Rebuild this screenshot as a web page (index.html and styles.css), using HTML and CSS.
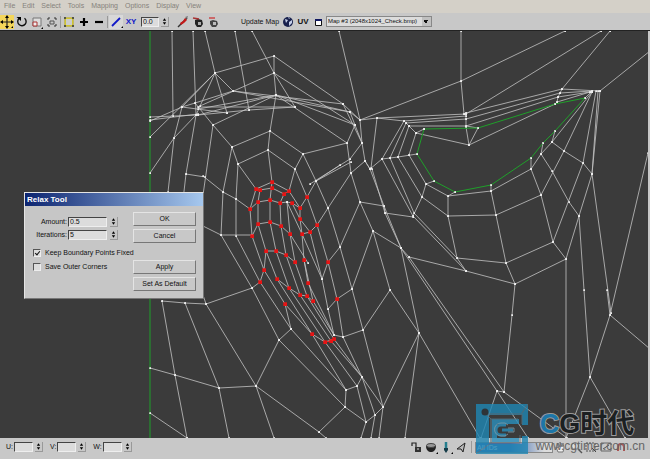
FILE: index.html
```
<!DOCTYPE html>
<html>
<head lang="en">
    <meta charset="UTF-8">
    <title>Edit UVWs</title>
    <link rel="stylesheet" href="styles.css">
</head>
<body>

<ul class="menu">
    <li><a href="#">File</a></li>
    <li><a href="#">Edit</a></li>
    <li><a href="#">Select</a></li>
    <li><a href="#">Tools</a></li>
    <li><a href="#">Mapping</a></li>
    <li><a href="#">Options</a></li>
    <li><a href="#">Display</a></li>
    <li><a href="#">View</a></li>
</ul>

<div class="toolbar">
    <div class="tools">
        <button class="tool active" aria-label="Move"><svg viewBox="0 0 14 14"><path d="M7 2v10M2 7h10" stroke="#222" stroke-width="1.2"/><path d="M7 0l2 3H5zM7 14l2-3H5zM0 7l3-2v4zM14 7l-3-2v4z"/><path d="M11 13h2v-2z"/></svg></button>
        <button class="tool" aria-label="Rotate"><svg viewBox="0 0 14 14"><path d="M4 3.500A4.200 4.200 0 1 0 9.500 3.200" fill="none" stroke="#111" stroke-width="1.400"/><path d="M1.500 2h4.500v4z"/></svg></button>
        <button class="tool" aria-label="Scale"><svg viewBox="0 0 14 14"><path d="M3 3h8v8H3z" fill="#ddd" stroke="#777"/><path d="M3 7h4v4H3z" fill="#eee" stroke="#a33"/><path d="M11 14h2v-2z"/></svg></button>
        <button class="tool" aria-label="Freeform mode"><svg viewBox="0 0 14 14"><path d="M3 5V3h2M9 3h2v2M11 9v2H9M5 11H3V9" fill="none" stroke="#333"/><path d="M5 6h4v3H5z" fill="none" stroke="#555"/></svg></button>
        <span class="sep"></span>
        <button class="tool" aria-label="Select element"><svg viewBox="0 0 14 14"><path d="M3 3h8v8H3z" fill="#e8e060" stroke="#b8a800"/><path d="M2 2h2v2H2zM10 2h2v2h-2zM2 10h2v2H2zM10 10h2v2h-2z" fill="#554"/><path d="M4 4h6v6H4z" fill="#ccc"/></svg></button>
        <button class="tool" aria-label="Expand selection"><svg viewBox="0 0 14 14"><path d="M7 3v8M3 7h8" stroke="#000" stroke-width="2.200"/></svg></button>
        <button class="tool" aria-label="Contract selection"><svg viewBox="0 0 14 14"><path d="M3 7h8" stroke="#000" stroke-width="2.200"/></svg></button>
        <span class="sep"></span>
        <button class="tool lit" aria-label="Soft selection falloff"><svg viewBox="0 0 14 14"><path d="M3 11l8-8" stroke="#1018c8" stroke-width="1.800"/><path d="M12 13h2v-2z"/></svg></button>
        <button class="tool axis">XY</button>
        <span class="spinner">
            <input type="text" value="0.0" aria-label="Falloff" class="num falloff">
            <button class="arrows" aria-label="Adjust falloff"><svg viewBox="0 0 6 10"><path d="M3 1l2 3H1zM3 9l2-3H1z"/></svg></button>
        </span>
        <button class="tool brush" aria-label="Break"><svg viewBox="0 0 14 14"><path d="M2 12l9-9" stroke="#333" stroke-width="1.400"/><path d="M4 8l3-2 2-3 2 2-3 3-3 2z" fill="#c21818"/><path d="M9 2l3-1-1 3z" fill="#777"/></svg></button>
        <button class="tool" aria-label="Weld"><svg viewBox="0 0 14 14"><path d="M4 5l3-1 4 1 1 4-2 3H6L4 9z" fill="#222"/><path d="M7 7h3v3H7z" fill="#aaa"/><path d="M2 3l6 1" stroke="#a33" stroke-width="1.300"/></svg></button>
        <button class="tool" aria-label="Weld selected"><svg viewBox="0 0 14 14"><path d="M4 6l3-1 4 1 1 3-2 3H6L4 9z" fill="#444"/><path d="M7 7h3v3H7z" fill="#bbb"/><path d="M3 3h6" stroke="#c33" stroke-width="1.300"/></svg></button>
    </div>
    <div class="map-tools">
        <button class="update">Update Map</button>
        <button class="tool" aria-label="Show map"><svg viewBox="0 0 14 14"><circle cx="7" cy="7" r="5" fill="#18204c"/><path d="M4 4l3 1-2 3zM8 7l3-2v3l-3 3zM7 2l2 1-1 1z" fill="#c6d0ea"/></svg></button>
        <button class="tool uv">UV</button>
        <button class="tool" aria-label="Show dialog"><svg viewBox="0 0 14 14"><path d="M4.500 4.500h6v6h-6z" fill="#fff" stroke="#111"/><path d="M4 4h7v2H4z" fill="#101860"/></svg></button>
        <select class="map-list" aria-label="Texture">
            <option>Map #3 (2048x1024_Check.bmp)</option>
        </select>
    </div>
</div>

<div class="view">
    <svg class="mesh" viewBox="0 31 648 407" preserveAspectRatio="xMidYMid slice">
        <defs>
            <marker id="dot" markerUnits="userSpaceOnUse" markerWidth="1.400" markerHeight="1.400" refX="0.700" refY="0.700"><path d="M0 0h2v2H0z"/></marker>
            <marker id="picked" markerUnits="userSpaceOnUse" markerWidth="3.400" markerHeight="3.400" refX="1.700" refY="1.700"><path d="M0 0h4v4H0z"/></marker>
        </defs>
        <path class="seam" d="M150 31V438"/>

        <!-- upper left -->
        <path class="wire" d="M172 31L173 116M193 31L196 115M205 31L215 73L227 113M235 31L249 110M252 31L274 73
            M274 56V73L276 95L270 131L268 150L272 182M215 73L274 56L343 104M274 73L355 125M274 73L295 107
            M276 95L347 143M215 73L233 91L343 104M215 73L182 107L195 103L233 91L350 112M215 73L196 115M215 73L150 137
            M150 117L198 115L249 110L295 107M150 121L182 107M150 120L198 114M274 73L200 106M198 109L276 95L355 125M198 115L276 95L350 112
            M150 173L174 138L196 115M182 107L174 138L168 192M196 115L186 174L205 177M186 174L183 200
            M195 103L213 125L232 147L238 164L256 189M276 95L213 125L203 195M232 147L223 192M238 164L236 199
            M182 107L227 113M198 107L295 107
            M232 147L270 131L303 154L295 169L289 191M238 164L268 150L295 169L307 197M303 154L347 143M303 154L316 181"/>

        <!-- centre ridge -->
        <path class="wire" d="M339 31L360 120L362 143L365 161L370 169M343 104L360 120M343 104L362 143M350 112L355 125L347 143L351 173M355 125L362 143
            M350 112L360 120M360 120L461 81L565 31M461 31L461 81L464 114M360 120L377 118L466 114M377 118L404 121L466 116M377 118L371 168
            M406 123L466 119M409 126L466 126L478 128M416 133L469 145M404 121L382 159M406 123L390 158M409 126L398 157M416 133L409 155
            M365 161L370 169L382 159L390 158L398 157L417 154M404 121L409 126L416 133L424 129M464 114L466 113V127L469 145L478 128
            M310 184L350 159L362 143M316 181L351 162M351 173L365 161"/>

        <!-- eye socket -->
        <path class="wire" d="M466 114L601 31M562 89L610 31M466 113L562 89M466 119L560 93M466 126L558 97M600 91L650 51
            M562 89L600 91M560 93L592 91M558 97L562 89M557 102L558 97L590 92M469 145L555 104L557 102L590 92M585 98L592 91
            M592 92L552 142L541 154L531 169L491 191M555 131L552 142M543 143L541 154M531 158L531 169
            M592 92L564 151L541 195M596 91L583 163L553 242M598 91L592 174M600 91L592 174
            M552 142L564 151L583 163L592 174M541 154L552 171L569 202L579 216M434 181L426 184L448 196L491 191
            M455 192L448 196L448 216L457 258L506 263L553 242L541 195L531 169M491 185V191L496 215L506 263L515 284L566 259L553 242
            M409 155L426 184L422 197L413 216M398 157L422 197L448 216L496 215L541 195
            M592 174L579 216L566 259V438M592 174L611 313M579 216L584 290L590 377M515 284L512 315L504 392
            M382 159L413 216L466 271M390 158L414 213L457 258L466 271M409 257L466 271L515 284
            M648 153L610 315L590 377L566 438M590 377L625 438M607 290L610 315L650 349"/>

        <!-- nose and cheek -->
        <path class="wire" d="M360 202L384 206L385 213L413 217M370 169L384 206L401 248L409 257L504 392M372 169L385 213L401 248L497 391L504 392
            M401 248L419 333M373 231L401 248M351 173L360 202L373 231L390 290L419 333M373 231L352 289M390 290L363 330
            M419 333L383 407M419 333L405 438M419 333L480 438M497 391L481 438M497 391L528 438M504 392L567 438"/>

        <!-- mouth strips -->
        <path class="wire" d="M256 189L272 182L289 191L300 208L307 197L316 181L340 165M256 189L260 190L272 188L284 194L289 191M284 194L280 203M260 190L258 202
            M250 209L258 202L270 200L280 203L287 202L292 203L300 208M252 236L258 224L270 222L281 226L290 234M302 234L310 232L317 225L328 208
            M256 189L250 209L252 236L264 270M258 202V224L266 251M272 182L270 200V222L276 251M280 203L281 226L286 255M287 202L290 234L295 262M287 202L302 234L322 279
            M292 203L300 219L310 232L322 279M300 208V219L302 234L304 260L308 283M307 197L317 225L328 262L337 299L343 337
            M266 251H276L286 255L295 262M266 251L264 270L260 282L252 288L206 304L185 303L162 301
            M290 234L308 263M203 176L223 192L236 199L250 209M203 226L221 235H252M223 192L221 235L252 288L279 340L256 386
            M236 199V236L260 282L291 329M316 181L328 208L340 247L352 289L363 330L383 407
            M351 173L328 208M360 202L340 247L328 262L322 279L328 309L337 299L352 289M328 309L334 335L343 337L363 330
            M264 270L285 304M266 251L277 279L289 288L300 295L307 296L313 301M276 251L289 288M286 255L300 295M295 262L307 296M304 260L313 301
            M277 279L312 334M289 288L325 342M300 295L331 341M307 296L334 339M313 301L334 335M308 283L334 335"/>

        <!-- chin -->
        <path class="wire" d="M343 337L362 377L357 386L346 390M334 339L362 377L383 407M325 342L357 386M331 341L362 377M312 334L346 390
            M285 304L312 334L325 342L334 339M346 390L345 407L319 432L256 386M279 340L345 407M291 329L346 390M279 340L291 329L285 304
            M206 304L256 386M206 304L203 295M185 303L219 388L229 438M162 301L175 375L187 438M150 368L175 375L219 388L256 386L274 438M150 413L187 438
            M319 432L326 438M345 407L366 422L375 415L383 407M357 386L366 422L361 438M362 377L375 415L371 438M383 407L379 438"/>

        <path class="open-edge" d="M424 129L478 128L555 104L585 98L555 131L543 143L531 158L491 185L455 192L434 181L417 154Z"/>
        <path class="edge" d="M325 342L331 341L334 339M256 189L260 190M284 194L289 191"/>
        <path class="points" d="M256 189L260 190L272 182L272 188L284 194L289 191L250 209L258 202L270 200L280 203L292 203L300 208L307 197
            L300 219L317 225L310 232L302 234L290 234L281 226L270 222L258 224L252 236L266 251L276 251L286 255L295 262L304 260L328 262
            L264 270L260 282L277 279L289 288L300 295L307 296L313 301L308 283L337 299L285 304L312 334L325 342L331 341L334 339"/>
    </svg>

    <form class="dialog">
        <h1 class="dialog-title">Relax Tool</h1>
        <div class="dialog-body">
            <div class="fields">
                <div class="field">
                    <label for="amount">Amount:</label>
                    <input type="text" id="amount" value="0.5" class="num">
                    <button type="button" class="arrows" aria-label="Adjust amount"><svg viewBox="0 0 6 10"><path d="M3 1l2 3H1zM3 9l2-3H1z"/></svg></button>
                </div>
                <div class="field">
                    <label for="iterations">Iterations:</label>
                    <input type="text" id="iterations" value="5" class="num">
                    <button type="button" class="arrows" aria-label="Adjust iterations"><svg viewBox="0 0 6 10"><path d="M3 1l2 3H1zM3 9l2-3H1z"/></svg></button>
                </div>
                <label class="check first"><input type="checkbox" checked>Keep Boundary Points Fixed</label>
                <label class="check"><input type="checkbox">Save Outer Corners</label>
            </div>
            <div class="buttons">
                <button type="button">OK</button>
                <button type="button">Cancel</button>
                <button type="button" class="apply">Apply</button>
                <button type="button">Set As Default</button>
            </div>
        </div>
    </form>
</div>

<div class="status">
    <div class="coords">
        <label for="u">U:</label>
        <input type="text" id="u" class="num">
        <button class="arrows" aria-label="Adjust U"><svg viewBox="0 0 6 10"><path d="M3 1l2 3H1zM3 9l2-3H1z"/></svg></button>
        <label for="v">V:</label>
        <input type="text" id="v" class="num">
        <button class="arrows" aria-label="Adjust V"><svg viewBox="0 0 6 10"><path d="M3 1l2 3H1zM3 9l2-3H1z"/></svg></button>
        <label for="w">W:</label>
        <input type="text" id="w" class="num">
        <button class="arrows" aria-label="Adjust W"><svg viewBox="0 0 6 10"><path d="M3 1l2 3H1zM3 9l2-3H1z"/></svg></button>
    </div>
    <div class="view-tools">
        <button class="tool" aria-label="Lock"><svg viewBox="0 0 14 14"><path d="M6 7h6v5H6z" fill="#333"/><path d="M3 6V3h4v4" fill="none" stroke="#222" stroke-width="1.200"/><path d="M8 9h2" stroke="#ddd"/></svg></button>
        <button class="tool" aria-label="Hide"><svg viewBox="0 0 14 14"><path d="M2 6c0 8 10 8 10 0z" fill="#222"/><ellipse cx="7" cy="5.500" rx="4.500" ry="2" fill="#999" stroke="#444"/><path d="M12 14h2v-2z"/></svg></button>
        <button class="tool" aria-label="Freeze"><svg viewBox="0 0 14 14"><path d="M7 2v7" stroke="#257e8e" stroke-width="2.500"/><path d="M5 8h4v2l-2 3-2-3z" fill="#153c48"/><path d="M12 14h2v-2z"/></svg></button>
        <button class="tool" aria-label="Filter faces"><svg viewBox="0 0 14 14"><path d="M3 9l8-6-2 9-2-3z" fill="#bbb" stroke="#222"/></svg></button>
        <span class="sep"></span>
        <select class="id-list" aria-label="Material IDs">
            <option>All IDs</option>
        </select>
        <button class="tool" aria-label="Pan"><svg viewBox="0 0 14 14"><path d="M4 12L2 7l2 1V3l2 4V2l2 5 1-4 1 5-1 4z" fill="#eee" stroke="#777"/></svg></button>
        <button class="tool" aria-label="Zoom"><svg viewBox="0 0 14 14"><circle cx="6" cy="6" r="3.500" fill="#ddd" stroke="#777"/><path d="M9 9l4 4" stroke="#555" stroke-width="1.500"/></svg></button>
        <button class="tool" aria-label="Zoom region"><svg viewBox="0 0 14 14"><path d="M2 3h9v8H2z" fill="none" stroke="#555" stroke-dasharray="2 1"/><path d="M8 8l4 4" stroke="#444"/></svg></button>
        <button class="tool" aria-label="Zoom extents"><svg viewBox="0 0 14 14"><path d="M2 3h10v8H2z" fill="none" stroke="#666"/><path d="M4 9l6-4" stroke="#555"/></svg></button>
        <button class="tool" aria-label="Snap"><svg viewBox="0 0 14 14"><path d="M4 11V7a3 3 0 0 1 6 0v4" fill="none" stroke="#a55" stroke-width="2"/></svg></button>
    </div>
</div>

<div class="watermark">
    <svg class="wm-logo" viewBox="0 0 52 50">
        <path d="M0 0H52V21H46V11H13V40H46V32H52V50H0Z" fill="#1f86b4"/>
        <path d="M16 15H43V20H21V34H43V38H16Z" fill="#2a8fbc"/>
        <path d="M10 10L15 15V39L1 49M10 10H46V20M44 31V39H15V15H42M52 0L46 9" fill="none" stroke="#5b7480"/>
        <path d="M30 21H25A4 4 0 0 0 25 31H30M26 26H37" fill="none" stroke="#2a8fbc" stroke-width="3"/>
        <path d="M32 21L29 19H25A6 6 0 0 0 25 32H29L32 30M32 24H38V28H32" fill="none" stroke="#8fb4c4" stroke-width=".8"/>
        <circle cx="9" cy="8" r="3.500" fill="#2b3338"/>
    </svg>
    <div class="wm-text">
        <div class="wm-name"><span class="wm-c">C</span>G时代</div>
        <div class="wm-url">www.cgtimer.com.cn</div>
    </div>
</div>

</body>
</html>
```
FILE: styles.css
```
html, body, ul, li, h1, form {
    padding: 0px;
    margin: 0px;
}

body {
    display: flex;
    flex-direction: column;
    position: relative;
    height: 100vh;
    overflow: hidden;
    background: #c8c8c8;
    font-family: "Liberation Sans", "Noto Sans CJK SC", sans-serif;
    font-size: 7px;
    line-height: 10px;
    color: #111111;
}

button, input, select {
    box-sizing: border-box;
    margin: 0px;
    padding: 0px;
    border: 0;
    background: none;
    font: inherit;
    color: inherit;
}

.menu {
    display: flex;
    gap: 7px;
    padding: 1px 4px 2px;
    background: #d4d0c8;
    list-style: none;
}

.menu a {
    color: #85827c;
    text-decoration: none;
}

.toolbar {
    display: flex;
    align-items: center;
    height: 17px;
    border-bottom: 1px solid #222222;
}

.tools, .map-tools, .view-tools, .coords, .spinner {
    display: flex;
    align-items: center;
}

.tools {
    gap: 1px;
}

.tool {
    width: 14px;
    height: 14px;
    flex: none;
}

.tool svg, .arrows svg {
    display: block;
    width: 100%;
    height: 100%;
}

.tool.active {
    background: #f4d65a;
}

.tool.lit {
    background: #d8d8d8;
}

.tool.axis {
    color: #1018c8;
    font-size: 8px;
    font-weight: bold;
}

.tool.uv {
    font-size: 8px;
    font-weight: bold;
}

.tool.brush {
    margin-left: 6px;
}

.sep {
    width: 1px;
    height: 12px;
    background: #999999;
}

.num {
    height: 10px;
    padding-left: 1px;
    border: 1px solid #eeeeee;
    border-top-color: #444444;
    border-left-color: #444444;
    background: #dcdcdc;
}

.falloff {
    width: 18px;
}

.arrows {
    width: 8px;
    height: 10px;
    padding: 0px 1px;
    border-right: 1px solid #999999;
    border-bottom: 1px solid #999999;
}

.spinner {
    gap: 2px;
    margin-left: 2px;
}

.map-tools {
    margin-left: 20px;
    gap: 1px;
}

.update {
    width: 40px;
    white-space: nowrap;
}

.map-list, .id-list {
    height: 11px;
    padding-left: 1px;
    border: 1px solid #888888;
    appearance: none;
}

.map-list {
    width: 106px;
    background: linear-gradient(135deg, #111111 50%, transparent 50%) right 2px top 3px / 3px 3px no-repeat, linear-gradient(225deg, #111111 50%, transparent 50%) right 5px top 3px / 3px 3px no-repeat, linear-gradient(#c0c0c0, #c0c0c0) right / 9px 100% no-repeat, #dcdcdc;
    font-size: 6px;
    line-height: 9px;
}

.view {
    position: relative;
    flex: 1;
    min-height: 0;
    border-right: 2px solid #c8c8c8;
    background: #3b3b3b;
}

.mesh {
    display: block;
    width: 100%;
    height: 100%;
}

.mesh path {
    fill: none;
}

.mesh #dot path {
    fill: #eeeeee;
}

.mesh #picked path {
    fill: #e81414;
}

.wire {
    stroke: #c4c4c4;
    stroke-width: 0.8;
    marker: url(#dot);
}

.seam, .open-edge {
    stroke: #1fa02a;
}

.open-edge {
    marker: url(#dot);
}

.edge {
    stroke: #d83030;
}

.points {
    marker: url(#picked);
}

/* floating dialog over the mesh */
.dialog {
    position: absolute;
    left: 24px;
    top: 161px;
    width: 180px;
    box-sizing: border-box;
    border: 1px solid #e4e4e4;
    border-right-color: #777777;
    border-bottom-color: #777777;
    background: #c6c6c6;
}

.dialog-title {
    padding: 1px 2px;
    background: linear-gradient(to right, #0c2470, #a6c8ee);
    color: #ffffff;
    font-size: 8px;
    line-height: 11px;
}

.dialog-body {
    display: flex;
    justify-content: space-between;
    padding: 6px 7px 7px;
}

.fields {
    width: 98px;
}

.field {
    display: flex;
    align-items: center;
    gap: 1px;
    height: 13px;
}

.field:first-child {
    margin-top: 3px;
}

.field label {
    width: 35px;
    text-align: right;
}

.field .num {
    width: 39px;
}

.field .arrows {
    margin-left: 2px;
}

.check {
    display: flex;
    align-items: center;
    gap: 4px;
    height: 14px;
    padding-left: 1px;
    white-space: nowrap;
}

.check.first {
    margin-top: 5px;
}

.check input {
    flex: none;
    width: 8px;
    height: 8px;
    box-sizing: border-box;
    appearance: none;
    border: 1px solid #eeeeee;
    border-top-color: #555555;
    border-left-color: #555555;
    background: #dcdcdc;
}

.check input:checked::before {
    content: "";
    display: block;
    width: 2px;
    height: 4px;
    margin-left: 2px;
    border: solid #111111;
    border-width: 0 1px 1px 0;
    transform: rotate(40deg);
}

.buttons {
    display: flex;
    flex-direction: column;
    gap: 3px;
    width: 63px;
}

.buttons button {
    height: 14px;
    border: 1px solid #e4e4e4;
    border-right-color: #777777;
    border-bottom-color: #777777;
    background: #c8c8c8;
}

.buttons .apply {
    margin-top: 14px;
}

.status {
    display: flex;
    align-items: center;
    height: 21px;
    padding-bottom: 3px;
    box-sizing: border-box;
}

.coords {
    padding-left: 6px;
    gap: 1px;
}

.coords .num {
    width: 19px;
}

.coords .arrows {
    margin: 0px 6px 0px 1px;
}

.view-tools {
    flex: none;
    margin-left: auto;
    margin-right: 22px;
    gap: 1px;
}

.view-tools .sep {
    margin: 0px 2px;
}

.id-list {
    width: 78px;
    background: linear-gradient(to right, #3f6bb0 45%, #dcdcdc 90%);
    color: #ffffff;
}

/* site mark over the lower right corner */
.watermark {
    position: absolute;
    right: 5px;
    bottom: 5px;
    display: flex;
    gap: 8px;
    pointer-events: none;
}

.wm-logo {
    width: 52px;
    height: 50px;
    opacity: 0.8;
}

.wm-text {
    padding-top: 5px;
    white-space: nowrap;
}

.wm-name {
    padding-left: 4px;
    color: #1c2022;
    font-size: 27px;
    font-weight: bold;
    line-height: 30px;
    -webkit-text-stroke: 2px #9a9a9a;
    paint-order: stroke fill;
}

.wm-c {
    color: #1d76a8;
}

.wm-url {
    color: #666666;
    font-size: 12px;
    line-height: 14px;
}
```
